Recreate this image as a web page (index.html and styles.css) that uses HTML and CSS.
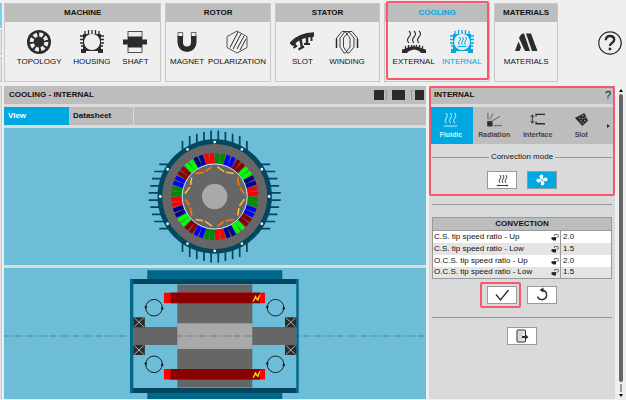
FILE: index.html
```
<!DOCTYPE html>
<html lang="en">
<head>
    <meta charset="UTF-8">
    <meta name="viewport" content="width=device-width, initial-scale=1.0">
    <title>Cooling - Internal</title>
    <link rel="stylesheet" href="styles.css">
</head>
<body>
    <div class="side-strip">
        <div class="strip-item active"></div>
        <div class="strip-item"></div>
        <div class="strip-item"></div>
        <div class="strip-item rest"></div>
    </div>

    <div class="app">
        <nav class="ribbon">
            <section class="group machine">
                <h2>MACHINE</h2>
                <div class="group-items">
                    <button type="button" class="tool">
                        <svg viewBox="0 0 24 24">
                            <circle cx="12" cy="12" r="12" fill="#2b2b2b"/>
                            <circle cx="12" cy="12" r="7.4" fill="none" stroke="#efefef" stroke-width="4" stroke-dasharray="3.8 2.01"/>
                        </svg>
                        <span>TOPOLOGY</span>
                    </button>
                    <button type="button" class="tool">
                        <svg viewBox="0 0 24 24">
                            <g id="frame">
                                <path d="M3 4h18v15h2v4h-5v-2H6v2H1v-4h2z M12 4a8 8 0 1 0 0.1 0z" fill="currentColor" fill-rule="evenodd"/>
                                <path d="M5 4V1M8.500 4V0M12 4V0M15.500 4V0M19 4V1M3 6H0M3 9.500H0M3 13H0M3 16H1M21 6h3M21 9.500h3M21 13h3M21 16h2" stroke="currentColor" stroke-width="1.300"/>
                            </g>
                        </svg>
                        <span>HOUSING</span>
                    </button>
                    <button type="button" class="tool">
                        <svg viewBox="0 0 24 24">
                            <rect x="5" y="1.500" width="14" height="21" fill="none" stroke="#2b2b2b" stroke-width="0.800"/>
                            <path d="M5 6.500h14v3h5v5h-5v3H5v-3H0v-5h5z" fill="#2b2b2b"/>
                        </svg>
                        <span>SHAFT</span>
                    </button>
                </div>
            </section>

            <section class="group rotor">
                <h2>ROTOR</h2>
                <div class="group-items">
                    <button type="button" class="tool">
                        <svg viewBox="0 0 24 24">
                            <path d="M2.500 6v6.500a9.500 9.500 0 0 0 19 0V6h-5.500v6.500a4 4 0 0 1-8 0V6z" fill="#2b2b2b"/>
                            <path d="M3 7V2.500h4.700V7M16.300 7V2.500H21V7" fill="none" stroke="#2b2b2b" stroke-width="0.700"/>
                        </svg>
                        <span>MAGNET</span>
                    </button>
                    <button type="button" class="tool">
                        <svg viewBox="0 0 24 24" fill="none" stroke="#2b2b2b" stroke-width="0.800">
                            <path d="M12 1L22 6.500v11L12 23 2 17.500v-11z"/>
                            <path d="M5 17.500L13 2M8 19L16 4M12 19L19 6M15 20L21 9" stroke-width="1"/>
                        </svg>
                        <span>POLARIZATION</span>
                    </button>
                </div>
            </section>

            <section class="group stator">
                <h2>STATOR</h2>
                <div class="group-items">
                    <button type="button" class="tool">
                        <svg viewBox="0 0 24 24">
                            <path d="M1 14.500Q9 5 24 4.500" fill="none" stroke="#2b2b2b" stroke-width="4.500"/>
                            <path d="M4 13l1.500 4M10.500 9l1.500 9M17 7v7" fill="none" stroke="#2b2b2b" stroke-width="2.500"/>
                            <path d="M3.500 18l3.500-2.500M8.500 19.500l5.500-3M14 14h6M21.500 6v5" fill="none" stroke="#2b2b2b" stroke-width="2"/>
                        </svg>
                        <span>SLOT</span>
                    </button>
                    <button type="button" class="tool">
                        <svg viewBox="0 0 24 24" fill="none" stroke="#2b2b2b" stroke-width="0.900">
                            <path d="M1.500 18V8L7 1.500h3L15 8v9l-4.500 6H9L5 17V8l5-6.500h3.500L19 8v9l-5 6h-1.500L8.500 17V8L14 1.500h3L22.500 8v10"/>
                            <path d="M1.500 18V9M22.500 18V9" stroke-width="1.500"/>
                        </svg>
                        <span>WINDING</span>
                    </button>
                </div>
            </section>

            <section class="group cooling marked">
                <h2>COOLING</h2>
                <div class="group-items">
                    <button type="button" class="tool">
                        <svg viewBox="0 0 24 24">
                            <path d="M7 1q3 3 0 6t0 6M12 1q3 3 0 6t0 6M17 1q3 3 0 6t0 6" fill="none" stroke="#2b2b2b" stroke-width="1.100"/>
                            <path d="M0 23v-3.500l2.500-0.500q9-5.500 19 0l2.500 0.500V23h-5.500v-1q-6-5-13 0v1z" fill="#2b2b2b"/>
                            <path d="M3.500 19v-3M6.500 18v-3M9.500 17v-2M12 17v-2M14.500 17v-2M17.500 18v-3M20.500 19v-3" stroke="#2b2b2b" stroke-width="1.300"/>
                        </svg>
                        <span>EXTERNAL</span>
                    </button>
                    <button type="button" class="tool active">
                        <svg viewBox="0 0 24 24">
                            <use href="#frame"/>
                            <path d="M9.500 7q2 2 0 4t0 4M12.500 7q2 2 0 4t0 4M15.500 7q2 2 0 4t0 4M7.500 16.500h9" fill="none" stroke="currentColor" stroke-width="1"/>
                        </svg>
                        <span>INTERNAL</span>
                    </button>
                </div>
            </section>

            <section class="group materials">
                <h2>MATERIALS</h2>
                <div class="group-items">
                    <button type="button" class="tool">
                        <svg viewBox="0 0 24 24" fill="#2b2b2b">
                            <path d="M1 21l3.500-9.500 2.500 6-1.500 3.500z"/>
                            <path d="M5 8q2-5 5-4.500L16 21h-5z"/>
                            <path d="M12 3.500h5L23.500 21h-5.500z"/>
                        </svg>
                        <span>MATERIALS</span>
                    </button>
                </div>
            </section>

            <button type="button" class="help" aria-label="Help">
                <svg viewBox="0 0 24 24" fill="none" stroke="#2b2b2b">
                    <circle cx="12" cy="12" r="11.200" stroke-width="1.200"/>
                    <path d="M7.800 9.300q0-4.300 4.200-4.300t4.200 3.700q0 1.800-2.200 3.200t-2 3.100" stroke-width="2.400"/>
                    <path d="M10.700 18h2.600" stroke-width="2.600"/>
                </svg>
            </button>
        </nav>

        <main class="workspace">
            <section class="viewer">
                <header class="bar">
                    <h1>COOLING - INTERNAL</h1>
                    <svg class="layout-icons" viewBox="0 0 52 10">
                        <path d="M1 0h10v10H1zM19 0h13v10H19zM42 0h9v10h-9z" fill="#2b2b2b"/>
                        <path d="M12 0.500h1.500v9H12M40 0.500h-1.500v9H40" fill="none" stroke="#999"/>
                    </svg>
                </header>
                <div class="view-tabs">
                    <button type="button" class="view-tab active">View</button>
                    <button type="button" class="view-tab">Datasheet</button>
                </div>

                <div class="view">
                    <svg viewBox="0 0 422 137">
                        <defs>
                            <rect id="bar" x="-2.100" y="-43.500" width="4.200" height="10.500"/>
                            <g id="quarter">
                                <g fill="#008b00"><use href="#bar" transform="rotate(3.75)"/><use href="#bar" transform="rotate(11.25)"/></g>
                                <g fill="#0000ff"><use href="#bar" transform="rotate(18.75)"/><use href="#bar" transform="rotate(26.25)"/></g>
                                <g fill="#8b0000"><use href="#bar" transform="rotate(33.75)"/><use href="#bar" transform="rotate(41.25)"/></g>
                                <g fill="#00ff00"><use href="#bar" transform="rotate(48.75)"/><use href="#bar" transform="rotate(56.25)"/></g>
                                <g fill="#00008b"><use href="#bar" transform="rotate(63.75)"/><use href="#bar" transform="rotate(71.25)"/></g>
                                <g fill="#ff0000"><use href="#bar" transform="rotate(78.75)"/><use href="#bar" transform="rotate(86.25)"/></g>
                            </g>
                            <path id="magnet" d="M2.700-29.700L9.500-24.800M11.500-24.200L19-23"/>
                            <path id="fins" d="M-32.200-55.500V-44M-25-60.500V-46M-17.900-62.700V-50M-10.700-64.400V-50M-3.600-66V-50M3.600-66V-50M10.700-64.400V-50M17.900-62.700V-50M25-60.500V-46M32.200-55.500V-44"/>
                            <g id="bolts">
                                <circle cy="-54.400" r="1.400"/>
                                <circle cy="-54.400" r="1.400" transform="rotate(30)"/>
                                <circle cy="-54.400" r="1.400" transform="rotate(60)"/>
                            </g>
                        </defs>
                        <g transform="translate(210.700 68.500)">
                            <g stroke="#02465f" stroke-width="1.700">
                                <use href="#fins"/>
                                <use href="#fins" transform="rotate(90)"/>
                                <use href="#fins" transform="rotate(180)"/>
                                <use href="#fins" transform="rotate(270)"/>
                            </g>
                            <circle r="57.200" fill="#02465f"/>
                            <circle r="52.500" fill="#666"/>
                            <g fill="#e4f6fb">
                                <use href="#bolts"/>
                                <use href="#bolts" transform="rotate(90)"/>
                                <use href="#bolts" transform="rotate(180)"/>
                                <use href="#bolts" transform="rotate(270)"/>
                            </g>
                            <use href="#quarter"/>
                            <use href="#quarter" transform="rotate(90)"/>
                            <use href="#quarter" transform="rotate(180)"/>
                            <use href="#quarter" transform="rotate(270)"/>
                            <circle r="32.500" fill="#666" stroke="#bce9f7" stroke-width="1"/>
                            <g stroke="#ffb83d" stroke-width="1.600">
                                <use href="#magnet"/>
                                <use href="#magnet" transform="rotate(90)"/>
                                <use href="#magnet" transform="rotate(180)"/>
                                <use href="#magnet" transform="rotate(270)"/>
                            </g>
                            <g stroke="#ff7300" stroke-width="1.600">
                                <use href="#magnet" transform="rotate(45)"/>
                                <use href="#magnet" transform="rotate(135)"/>
                                <use href="#magnet" transform="rotate(225)"/>
                                <use href="#magnet" transform="rotate(315)"/>
                            </g>
                            <circle r="12.700" fill="#a9a9a9"/>
                        </g>
                    </svg>
                </div>

                <div class="view">
                    <svg viewBox="0 0 422 131">
                        <defs>
                            <g id="bearing">
                                <rect width="11.500" height="10" fill="#2b2b2b"/>
                                <path d="M1 0.500l9.500 9M10.500 0.500l-9.500 9" stroke="#ccc" stroke-width="0.800"/>
                            </g>
                            <g id="airflow">
                                <circle r="8.300" fill="none" stroke="#111" stroke-width="0.900"/>
                                <path d="M-9.800-1.500h3l-1.300 3zM9.800 1.500h-3l1.300-3z" fill="#111"/>
                            </g>
                            <g id="coil">
                                <rect width="101" height="10.500" fill="#ff0000"/>
                                <rect x="6.500" width="89.500" height="10.500" fill="#8b0000"/>
                                <path d="M89 9l2.500-6 1.500 4 3-5-2 6-2-3z" fill="#ffe000" stroke="#ffe000" stroke-width="0.800"/>
                            </g>
                        </defs>
                        <path d="M143.300 2.300h135V11h16.400v114h-16.400v6h-135v-6H126V11h17.300z" fill="#00678a"/>
                        <path d="M129 11h163v5H129zM129 120h163v5H129z" fill="#02465f"/>
                        <path d="M129.300 16h163v104h-163z" fill="#6dbdd8"/>
                        <path d="M173.300 16.500h75v103h-75zM129.300 59h163v18h-163z" fill="#666"/>
                        <path d="M173.300 55.300h75V81h-75z" fill="#a9a9a9"/>
                        <use href="#coil" x="160" y="24.700"/>
                        <use href="#coil" x="160" y="101"/>
                        <use href="#bearing" x="129.300" y="49.300"/>
                        <use href="#bearing" x="129.300" y="77"/>
                        <use href="#bearing" x="281" y="49.300"/>
                        <use href="#bearing" x="281" y="77"/>
                        <use href="#airflow" x="150" y="39.700"/>
                        <use href="#airflow" x="150" y="96.300"/>
                        <use href="#airflow" x="271.500" y="39.700"/>
                        <use href="#airflow" x="271.500" y="96.300"/>
                        <path d="M0 68h422" stroke="#3d606c" stroke-opacity="0.600" stroke-width="1" stroke-dasharray="6 2 1.500 2"/>
                    </svg>
                </div>
            </section>

            <aside class="panel">
                <div class="marked panel-top">
                    <header class="bar">
                        <h2>INTERNAL</h2>
                        <button type="button" class="panel-help" aria-label="Panel help">?</button>
                    </header>
                    <div class="panel-tabs">
                        <button type="button" class="panel-tab active">
                            <svg viewBox="0 0 16 16" fill="none" stroke="currentColor">
                                <path d="M3.500 1q2.500 3 0 5.500t0 5.500M8 1q2.500 3 0 5.500t0 5.500M12.500 1q2.500 3 0 5.500t0 5.500M1 15h14"/>
                            </svg>
                            Fluidic
                        </button>
                        <button type="button" class="panel-tab">
                            <svg viewBox="0 0 16 16" fill="none" stroke="currentColor">
                                <path d="M0.500 10h5v5h-5z" fill="#2b2b2b"/>
                                <path d="M1 8V1M3 8l3.500-6.500M5.500 9.500L14 4.500M7 14.500h9" stroke-width="0.800"/>
                            </svg>
                            Radiation
                        </button>
                        <button type="button" class="panel-tab">
                            <svg viewBox="0 0 16 16" fill="none" stroke="#2b2b2b">
                                <path d="M16 2.500H6.500v2M16 12.500H6.500v-2" stroke-width="1.500"/>
                                <path d="M2.500 4v7M0.500 5.500l2-2.500 2 2.500M0.500 9.500l2 2.500 2-2.500"/>
                            </svg>
                            Interface
                        </button>
                        <button type="button" class="panel-tab">
                            <svg viewBox="0 0 16 16">
                                <path d="M1 6.500L11 1l4 8-6 6z" fill="#2b2b2b"/>
                                <g fill="#bdbdbd">
                                    <circle cx="9.500" cy="4" r="0.700"/><circle cx="12" cy="6" r="0.700"/>
                                    <circle cx="6" cy="6.500" r="0.700"/><circle cx="9" cy="7" r="0.700"/>
                                    <circle cx="11.500" cy="9" r="0.700"/><circle cx="7.500" cy="9.500" r="0.700"/>
                                    <circle cx="9.500" cy="11.500" r="0.700"/>
                                </g>
                            </svg>
                            Slot
                        </button>
                        <button type="button" class="more" aria-label="More tabs">
                            <svg viewBox="0 0 4 6"><path d="M0 1l3 2-3 2z" fill="#2b2b2b"/></svg>
                        </button>
                    </div>
                    <div class="mode">
                        <h3>Convection mode</h3>
                        <div class="buttons">
                            <button type="button" class="btn" aria-label="Natural convection">
                                <svg viewBox="0 0 16 16" fill="none" stroke="#2b2b2b">
                                    <path d="M6 3q2 2 0 4t0 4M9 3q2 2 0 4t0 4M12 3q2 2 0 4t0 4M3 13.500h11" stroke-width="0.900"/>
                                    <path d="M4.500 12.500v2l-2-1zM12.500 12.500v2l2-1z" fill="#2b2b2b" stroke="none"/>
                                </svg>
                            </button>
                            <button type="button" class="btn active" aria-label="Forced convection">
                                <svg viewBox="0 0 16 16" fill="#fff">
                                    <path id="blade" d="M8 7.500C4.500 6.500 5 2 8 2.500c2 0.500 1 3 0.500 5z"/>
                                    <use href="#blade" transform="rotate(90 8 8)"/>
                                    <use href="#blade" transform="rotate(180 8 8)"/>
                                    <use href="#blade" transform="rotate(270 8 8)"/>
                                </svg>
                            </button>
                        </div>
                    </div>
                </div>

                <div class="params">
                    <table>
                        <thead>
                            <tr><th colspan="2">CONVECTION</th></tr>
                        </thead>
                        <tbody>
                            <tr>
                                <td><label for="csUp">C.S. tip speed ratio - Up
                                    <svg viewBox="0 0 8 8"><path id="link" d="M0.500 4.500h4V7H2M3.500 3V1.500H7l0.500 2-2 1" fill="none" stroke="#555" stroke-width="0.800"/><path id="link-end" d="M0 5.800L2 4.300h3v3H2z" fill="#222"/></svg>
                                </label></td>
                                <td><input type="text" id="csUp" value="2.0"></td>
                            </tr>
                            <tr>
                                <td><label for="csLow">C.S. tip speed ratio - Low
                                    <svg viewBox="0 0 8 8"><use href="#link"/><use href="#link-end"/></svg>
                                </label></td>
                                <td><input type="text" id="csLow" value="1.5"></td>
                            </tr>
                            <tr>
                                <td><label for="ocsUp">O.C.S. tip speed ratio - Up
                                    <svg viewBox="0 0 8 8"><use href="#link"/><use href="#link-end"/></svg>
                                </label></td>
                                <td><input type="text" id="ocsUp" value="2.0"></td>
                            </tr>
                            <tr>
                                <td><label for="ocsLow">O.C.S. tip speed ratio - Low
                                    <svg viewBox="0 0 8 8"><use href="#link"/><use href="#link-end"/></svg>
                                </label></td>
                                <td><input type="text" id="ocsLow" value="1.5"></td>
                            </tr>
                        </tbody>
                    </table>
                    <div class="buttons">
                        <button type="button" class="btn marked" aria-label="Apply">
                            <svg viewBox="0 0 16 16"><path d="M2 7.500l4.500 5.500L14.500 3" fill="none" stroke="#2b2b2b" stroke-width="1.300"/></svg>
                        </button>
                        <button type="button" class="btn" aria-label="Reset">
                            <svg viewBox="0 0 16 16">
                                <path d="M3.500 9.500a4.700 4.700 0 1 0 5-6.300" fill="none" stroke="#2b2b2b" stroke-width="1.400"/>
                                <path d="M9.500 0.500v5L5.500 3z" fill="#2b2b2b"/>
                            </svg>
                        </button>
                    </div>
                </div>

                <div class="leave">
                    <button type="button" class="btn" aria-label="Exit">
                        <svg viewBox="0 0 16 16">
                            <rect x="3" y="2" width="8.500" height="12" rx="1" fill="#e4e4e4" stroke="#2b2b2b"/>
                            <path d="M5 5h4M5 7.500h3M5 10h3" stroke="#aaa" stroke-width="0.700"/>
                            <path d="M8 8h3V6l3.500 3-3.500 3v-2H8z" fill="#2b2b2b"/>
                        </svg>
                    </button>
                </div>
            </aside>

            <div class="scrollbar">
                <svg viewBox="0 0 4 3"><path d="M0 3l2-3 2 3z"/></svg>
                <div class="thumb"></div>
                <div class="track"></div>
                <svg viewBox="0 0 4 3"><path d="M0 0h4L2 3z"/></svg>
            </div>
        </main>
    </div>
</body>
</html>
```

FILE: styles.css
```
* {
    box-sizing: border-box;
}

body {
    display: flex;
    gap: 2px;
    min-height: 100vh;
    margin: 0;
    padding: 3px 0 2px;
    background-color: #efefef;
    color: #111;
    font-family: "Liberation Sans", Arial, sans-serif;
    font-size: 8px;
    line-height: 10px;
}

h1, h2, h3 {
    margin: 0;
    font-size: 8px;
    font-weight: bold;
}

button {
    padding: 0;
    border: none;
    background: none;
    color: inherit;
    font: inherit;
    cursor: pointer;
}

svg {
    display: block;
}

/* strip of the neighbouring panel */
.side-strip {
    display: flex;
    flex-direction: column;
    gap: 2px;
    width: 2px;
}

.strip-item {
    height: 25px;
    border: 1px solid #c8c8c8;
    border-left: none;
    background-color: #e2e2e2;
}

.strip-item.active {
    border-color: #7fd0ee;
    background-color: #7fd0ee;
}

.strip-item.rest {
    flex: 1;
    margin-top: 2px;
}

.app {
    display: flex;
    flex: 1;
    flex-direction: column;
    gap: 4px;
    min-width: 0;
}

/* ribbon */
.ribbon {
    display: flex;
    gap: 4px;
}

.group {
    height: 79px;
    min-width: 0;
    border: 1px solid #c8c8c8;
}

.machine {
    flex: 159;
}

.rotor,
.stator,
.cooling {
    flex: 106;
}

.materials {
    flex: 64;
}

.group h2 {
    padding: 4px 0;
    background-color: #bdbdbd;
    text-align: center;
}

.cooling h2 {
    color: #00a8e1;
}

.group-items {
    display: flex;
    justify-content: space-evenly;
    padding-top: 8px;
}

.tool {
    display: flex;
    flex-direction: column;
    align-items: center;
    gap: 3px;
    color: #2b2b2b;
}

.tool span {
    color: #111;
}

.tool svg {
    width: 24px;
    height: 24px;
}

.tool.active,
.tool.active span {
    color: #00a8e1;
}

.help {
    display: flex;
    flex: 61;
    align-items: center;
    justify-content: flex-end;
    padding-right: 4px;
}

.help svg {
    width: 24px;
    height: 24px;
}

/* highlighted areas */
.marked {
    position: relative;
}

.marked::after {
    content: "";
    position: absolute;
    inset: 0;
    border: 2px solid #f5596b;
    border-radius: 2px;
    pointer-events: none;
}

.cooling.marked::after {
    inset: -3px 0 1px 1px;
}

.btn.marked::after {
    inset: -5px -5px -5px -8px;
}

/* workspace */
.workspace {
    display: flex;
    flex: 1;
    gap: 3px;
}

.bar {
    display: flex;
    align-items: center;
    justify-content: space-between;
    height: 18px;
    padding: 0 1px 0 5px;
    background-color: #bdbdbd;
}

.viewer {
    display: flex;
    flex: 1;
    flex-direction: column;
    gap: 3px;
    min-width: 0;
    background-color: #dcdcdc;
}

.layout-icons {
    width: 52px;
    height: 10px;
}

.view-tabs {
    display: flex;
    height: 18px;
    background-color: #bdbdbd;
}

.view-tab {
    width: 65px;
    padding-left: 4px;
    border-right: 1px solid #dcdcdc;
    font-weight: bold;
    text-align: left;
}

.view-tab.active {
    border-right: none;
    background-color: #00a8e1;
    color: #fff;
}

.view {
    flex: 137;
    min-height: 0;
    background-color: #6dbdd8;
}

.view + .view {
    flex: 131;
}

.view svg {
    width: 100%;
}

/* settings panel */
.panel {
    width: 186px;
    background-color: #d9dadc;
}

.panel-top {
    height: 110px;
}

.panel-help {
    padding-right: 3px;
    font-size: 11px;
}

.panel-tabs {
    display: flex;
    height: 37px;
    margin-top: 3px;
    background-color: #bdbdbd;
}

.panel-tab {
    display: flex;
    flex: 1;
    flex-direction: column;
    align-items: center;
    gap: 3px;
    padding-top: 5px;
    color: #444;
    font-size: 7px;
    font-weight: bold;
}

.panel-tab svg {
    width: 15px;
    height: 15px;
}

.panel-tab.active {
    background-color: #00a8e1;
    color: #d8f2fc;
}

.more {
    display: flex;
    align-items: center;
    justify-content: center;
    width: 12px;
}

.more svg {
    width: 4px;
    height: 6px;
}

.mode {
    padding: 8px 3px 0;
}

.mode h3 {
    display: flex;
    align-items: center;
    gap: 2px;
    margin-bottom: 9px;
    font-weight: normal;
}

.mode h3::before,
.mode h3::after {
    content: "";
    flex: 1;
    height: 1px;
    background-color: #999;
}

.buttons {
    display: flex;
    justify-content: center;
    gap: 10px;
}

.btn {
    display: flex;
    align-items: center;
    justify-content: center;
    width: 30px;
    height: 18px;
    border: 1px solid #999;
    background-color: #fff;
}

.btn svg {
    width: 16px;
    height: 16px;
}

.btn.active {
    background-color: #00a8e1;
}

.params {
    margin: 8px 3px 0;
    padding: 12px 0 13px;
    border-top: 1px solid #999;
    border-bottom: 1px solid #999;
}

table {
    width: 100%;
    margin-bottom: 7px;
    border: 1px solid #999;
    border-collapse: collapse;
    background-color: #fff;
}

th {
    height: 13px;
    padding: 0;
    border-bottom: 1px solid #999;
    background-color: #bdbdbd;
}

td {
    height: 12px;
    padding: 0 1px;
}

td + td {
    width: 51px;
    border-left: 1px solid #999;
}

tbody tr:nth-child(even) {
    background-color: #e4e4e4;
}

label {
    display: flex;
    align-items: center;
    justify-content: space-between;
}

label svg {
    width: 8px;
    height: 8px;
}

input {
    display: block;
    width: 100%;
    height: 10px;
    padding: 0 1px;
    border: none;
    background: none;
    color: inherit;
    font: inherit;
}

.leave {
    display: flex;
    justify-content: center;
    padding-top: 9px;
}

.scrollbar {
    display: flex;
    flex-direction: column;
    align-items: center;
    gap: 2px;
    width: 8px;
    padding: 3px 2px 2px 0;
}

.scrollbar svg {
    width: 4px;
    height: 3px;
}

.thumb {
    flex: 1;
    width: 4px;
    border-radius: 2px;
    background-color: #666;
}

.track {
    width: 2px;
    height: 8px;
    background-color: #999;
}
```
